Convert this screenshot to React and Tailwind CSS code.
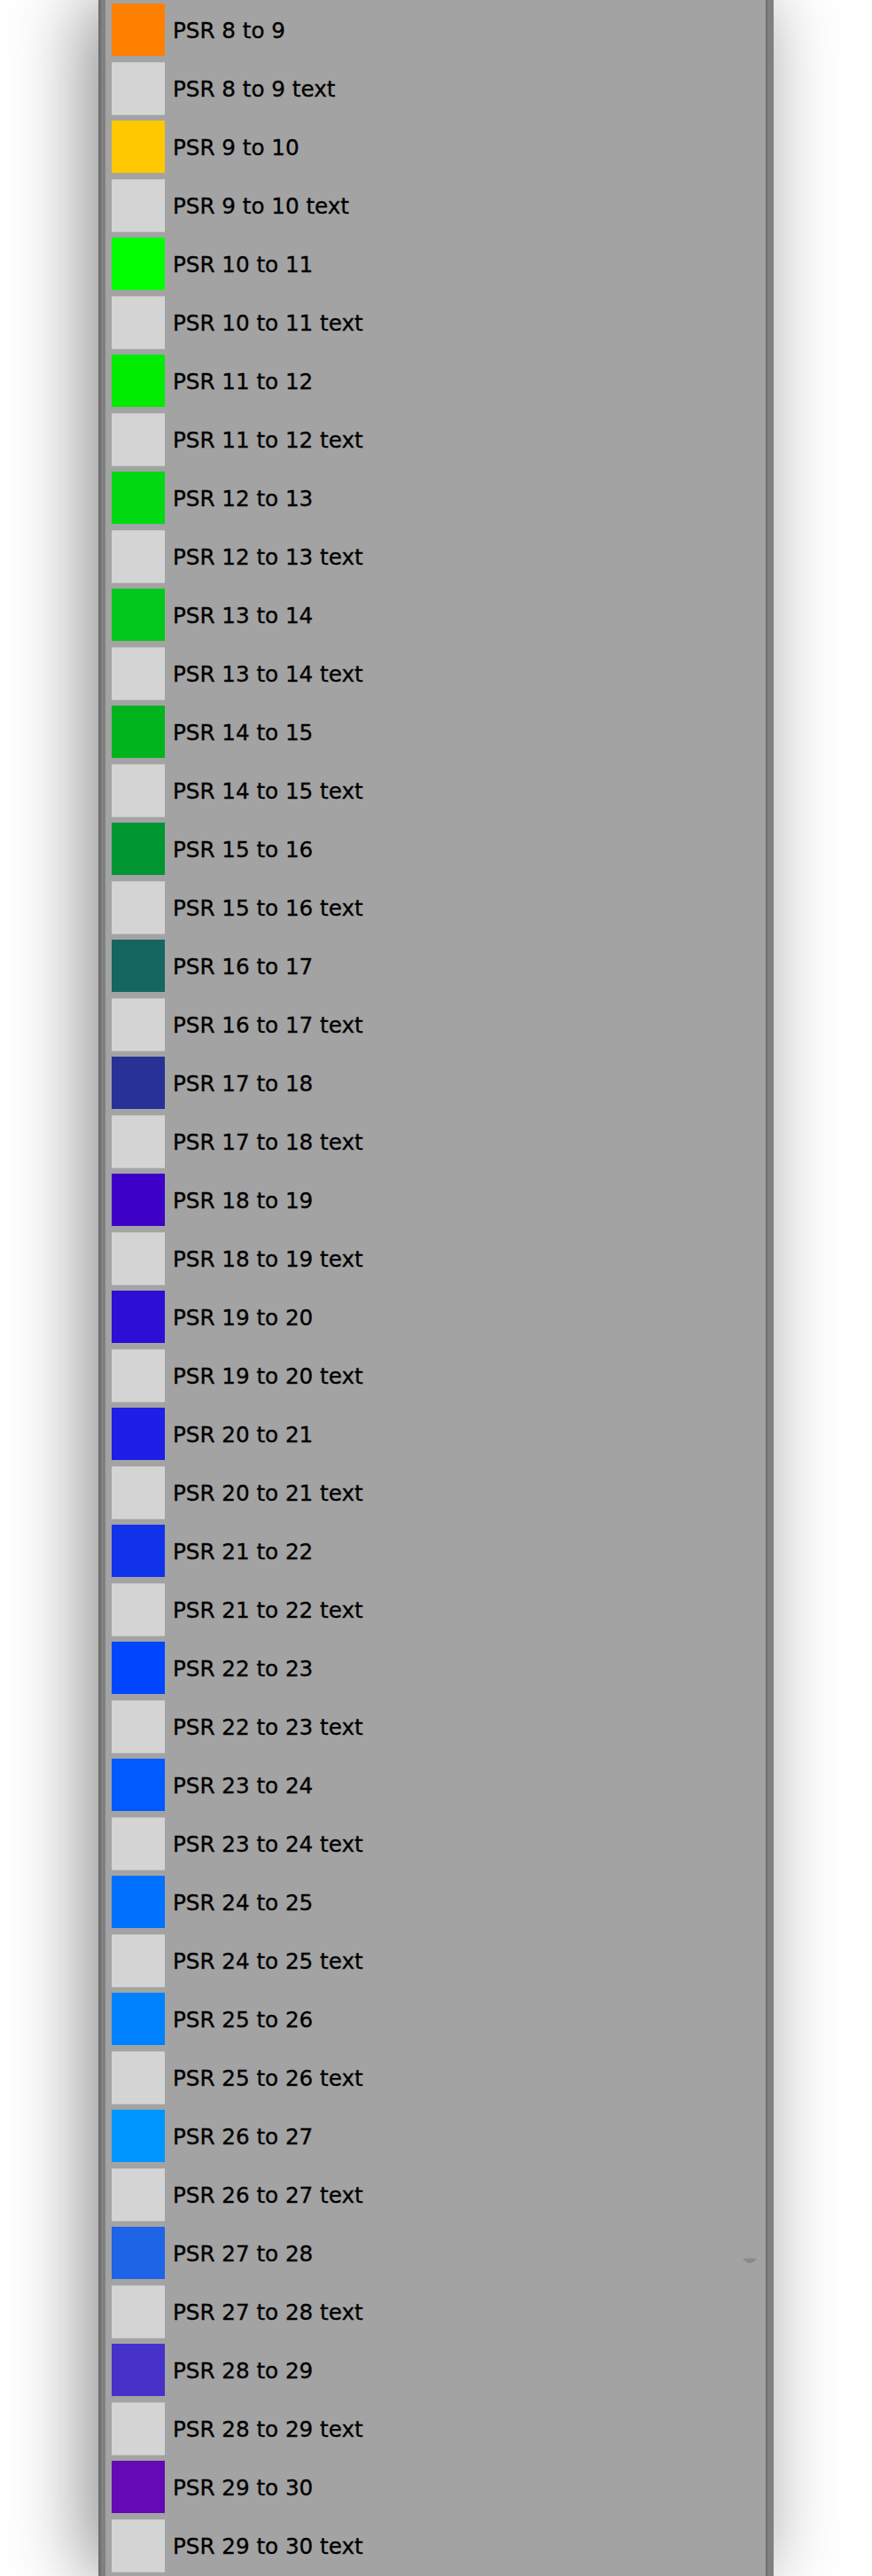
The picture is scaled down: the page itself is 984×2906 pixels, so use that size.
import React from "react";

const colors = [
  "#ff7f00", "#ffc800", "#00ff00", "#00ec00", "#00d912", "#00c81c",
  "#00b41e", "#009632", "#156661", "#283296", "#3c00c8", "#2c0ed4",
  "#1e1ee6", "#1132eb", "#0046ff", "#005aff", "#0070ff", "#0082ff",
  "#0096ff", "#1e64e6", "#4632c8", "#640ab4",
];

const rows = [];
colors.forEach((c, i) => {
  const a = 8 + i;
  rows.push({ color: c, label: `PSR ${a} to ${a + 1}`, light: false });
  rows.push({ color: "#d4d4d4", label: `PSR ${a} to ${a + 1} text`, light: true });
});

export default function App() {
  return (
    <div className="relative w-[984px] h-[2906px] overflow-hidden bg-white">
      <div className="ml-[111px] w-[762px] h-[2906px] flex shadow-[-14px_0_80px_rgba(0,0,0,0.45)]">
        <div className="w-[3px] bg-[#707070]" />
        <div className="w-[5px] bg-[#808080]" />
        <div className="flex-1 bg-[#a3a3a3] pt-[4px] pl-[7px] flex flex-col relative">
          {rows.map((r, i) => (
            <div key={i} className="h-[66px] flex items-start shrink-0">
              <div className="h-[60px] flex items-center">
                {r.light ? (
                  <div className="w-[60px] h-[60px] bg-[#d4d4d4] border-y border-[#c6c6c6]" />
                ) : (
                  <div className="w-[60px] h-[59px] mb-[1px]" style={{ backgroundColor: r.color }} />
                )}
                <span className="ml-[9px] mt-[2px] text-[24.6px] leading-[28px] text-black font-['DejaVu_Sans',sans-serif] whitespace-nowrap [-webkit-text-stroke:0.35px_#000]">
                  {r.label}
                </span>
              </div>
            </div>
          ))}
          <svg className="absolute left-[719px] top-[2547px]" width="16" height="7" viewBox="0 0 16 7">
            <path d="M0 1 Q8 0 16 1 Q12 6 8 6 Q4 6 0 1 Z" fill="#8a8a8a" />
          </svg>
        </div>
        <div className="w-[2px] bg-[#707070]" />
        <div className="w-[7px] bg-[#808080]" />
      </div>
    </div>
  );
}
